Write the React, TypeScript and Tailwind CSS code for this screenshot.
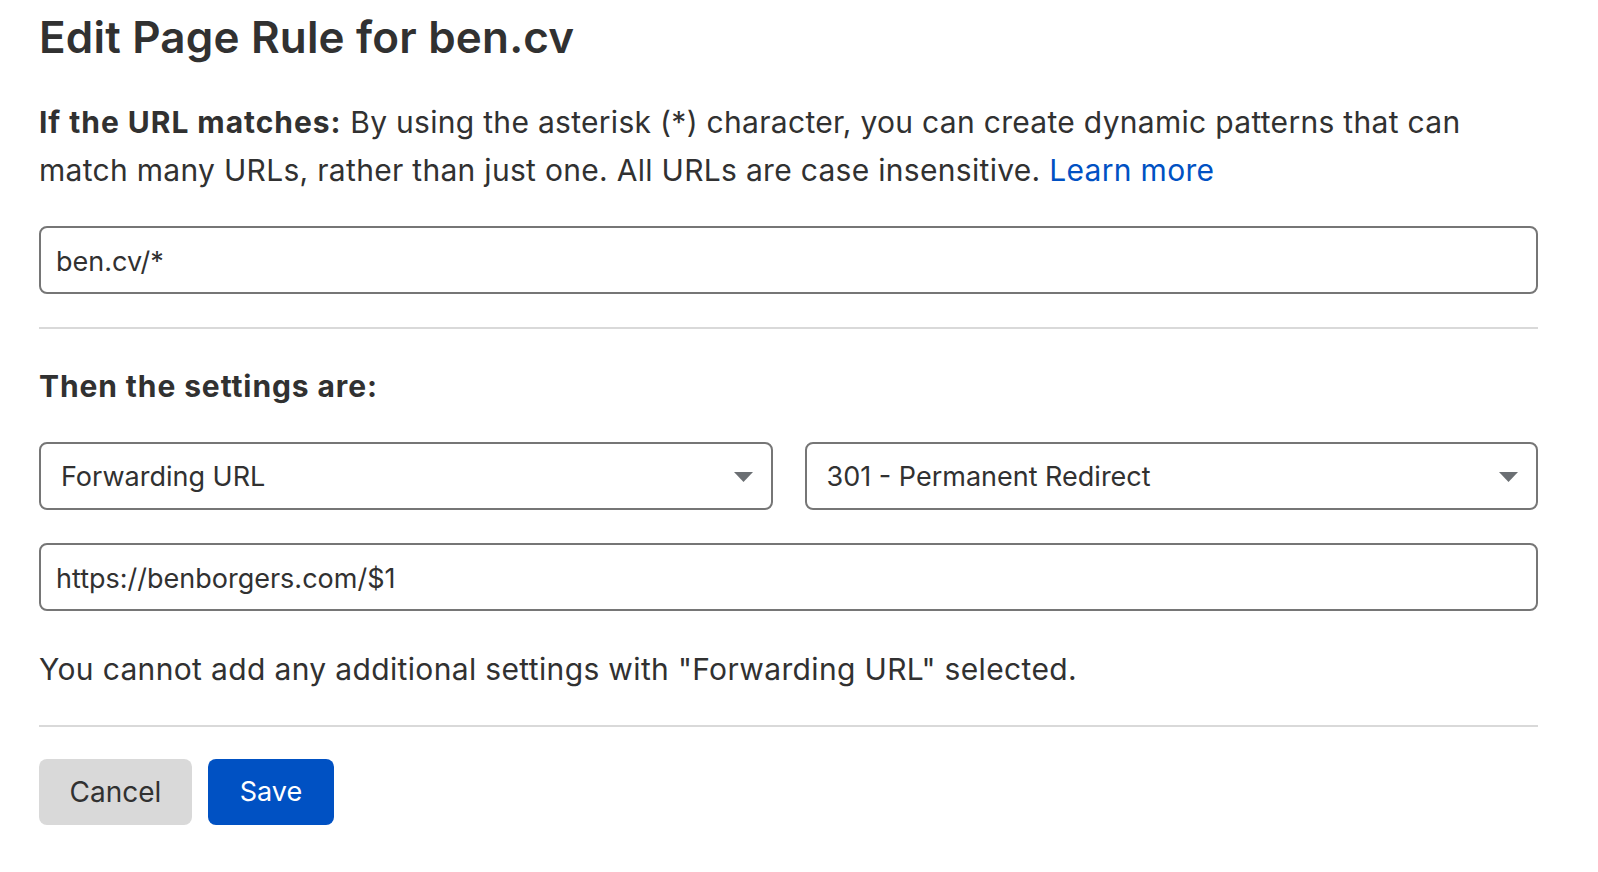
import { ChangeEvent, useState } from "react";

function Caret() {
  return (
    <svg width="19" height="10" viewBox="0 0 19 10" className="shrink-0">
      <path d="M0 0 L19 0 L9.5 10 Z" fill="#6b6f73" />
    </svg>
  );
}

function SelectBox({ value }: { value: string }) {
  return (
    <div className="flex h-[68px] items-center justify-between rounded-[8px] border-2 border-[#767676] bg-white pl-[20px] pr-[18px] pt-[2px]">
      <span className="text-[27px] text-[#313131]">{value}</span>
      <Caret />
    </div>
  );
}

export default function App() {
  const [pattern, setPattern] = useState("ben.cv/*");
  const [target, setTarget] = useState("https://benborgers.com/$1");

  return (
    <div
      className="min-h-screen bg-white pl-[39px] pt-[11px] text-[#313131]"
      style={{ fontFamily: "Inter, 'Noto Sans', sans-serif" }}
    >
      <div className="flex w-[1499px] flex-col">
        <h1 className="text-[44px] font-semibold leading-[52px] tracking-[0.18px]">
          Edit Page Rule for ben.cv
        </h1>

        <p className="mt-[35px] text-[30px] leading-[48px] tracking-[0.3px]">
          <span className="font-bold tracking-[0.95px]">If the URL matches:</span> By using the
          asterisk (*) character, you can create dynamic patterns that can match many URLs,
          rather than just one. All URLs are case insensitive.{" "}
          <a href="#" className="text-[#0051c3]">
            Learn more
          </a>
        </p>

        <input
          value={pattern}
          onChange={(e: ChangeEvent<HTMLInputElement>) => setPattern(e.target.value)}
          className="mt-[32px] h-[68px] rounded-[8px] border-2 border-[#767676] bg-white px-[15px] pt-[3px] text-[27px] text-[#313131] outline-none"
        />

        <hr className="mt-[33px] border-t-2 border-[#d9d9d9]" />

        <h3 className="mt-[33px] text-[30px] font-bold leading-[48px] tracking-[0.9px]">
          Then the settings are:
        </h3>

        <div className="mt-[32px] grid grid-cols-2 gap-[32px]">
          <SelectBox value="Forwarding URL" />
          <SelectBox value="301 - Permanent Redirect" />
        </div>

        <input
          value={target}
          onChange={(e: ChangeEvent<HTMLInputElement>) => setTarget(e.target.value)}
          className="mt-[33px] h-[68px] rounded-[8px] border-2 border-[#767676] bg-white px-[15px] pt-[3px] text-[27px] text-[#313131] outline-none"
        />

        <p className="mt-[34px] text-[30px] leading-[48px] tracking-[0.35px]">
          You cannot add any additional settings with "Forwarding URL" selected.
        </p>

        <hr className="mt-[32px] border-t-2 border-[#d9d9d9]" />

        <div className="mt-[32px] flex gap-4">
          <button className="h-[66px] w-[153px] rounded-[8px] bg-[#d9d9d9] text-[28px] text-[#313131]">
            Cancel
          </button>
          <button className="h-[66px] w-[126px] rounded-[8px] bg-[#0051c3] text-[27px] text-white">
            Save
          </button>
        </div>
      </div>
    </div>
  );
}
